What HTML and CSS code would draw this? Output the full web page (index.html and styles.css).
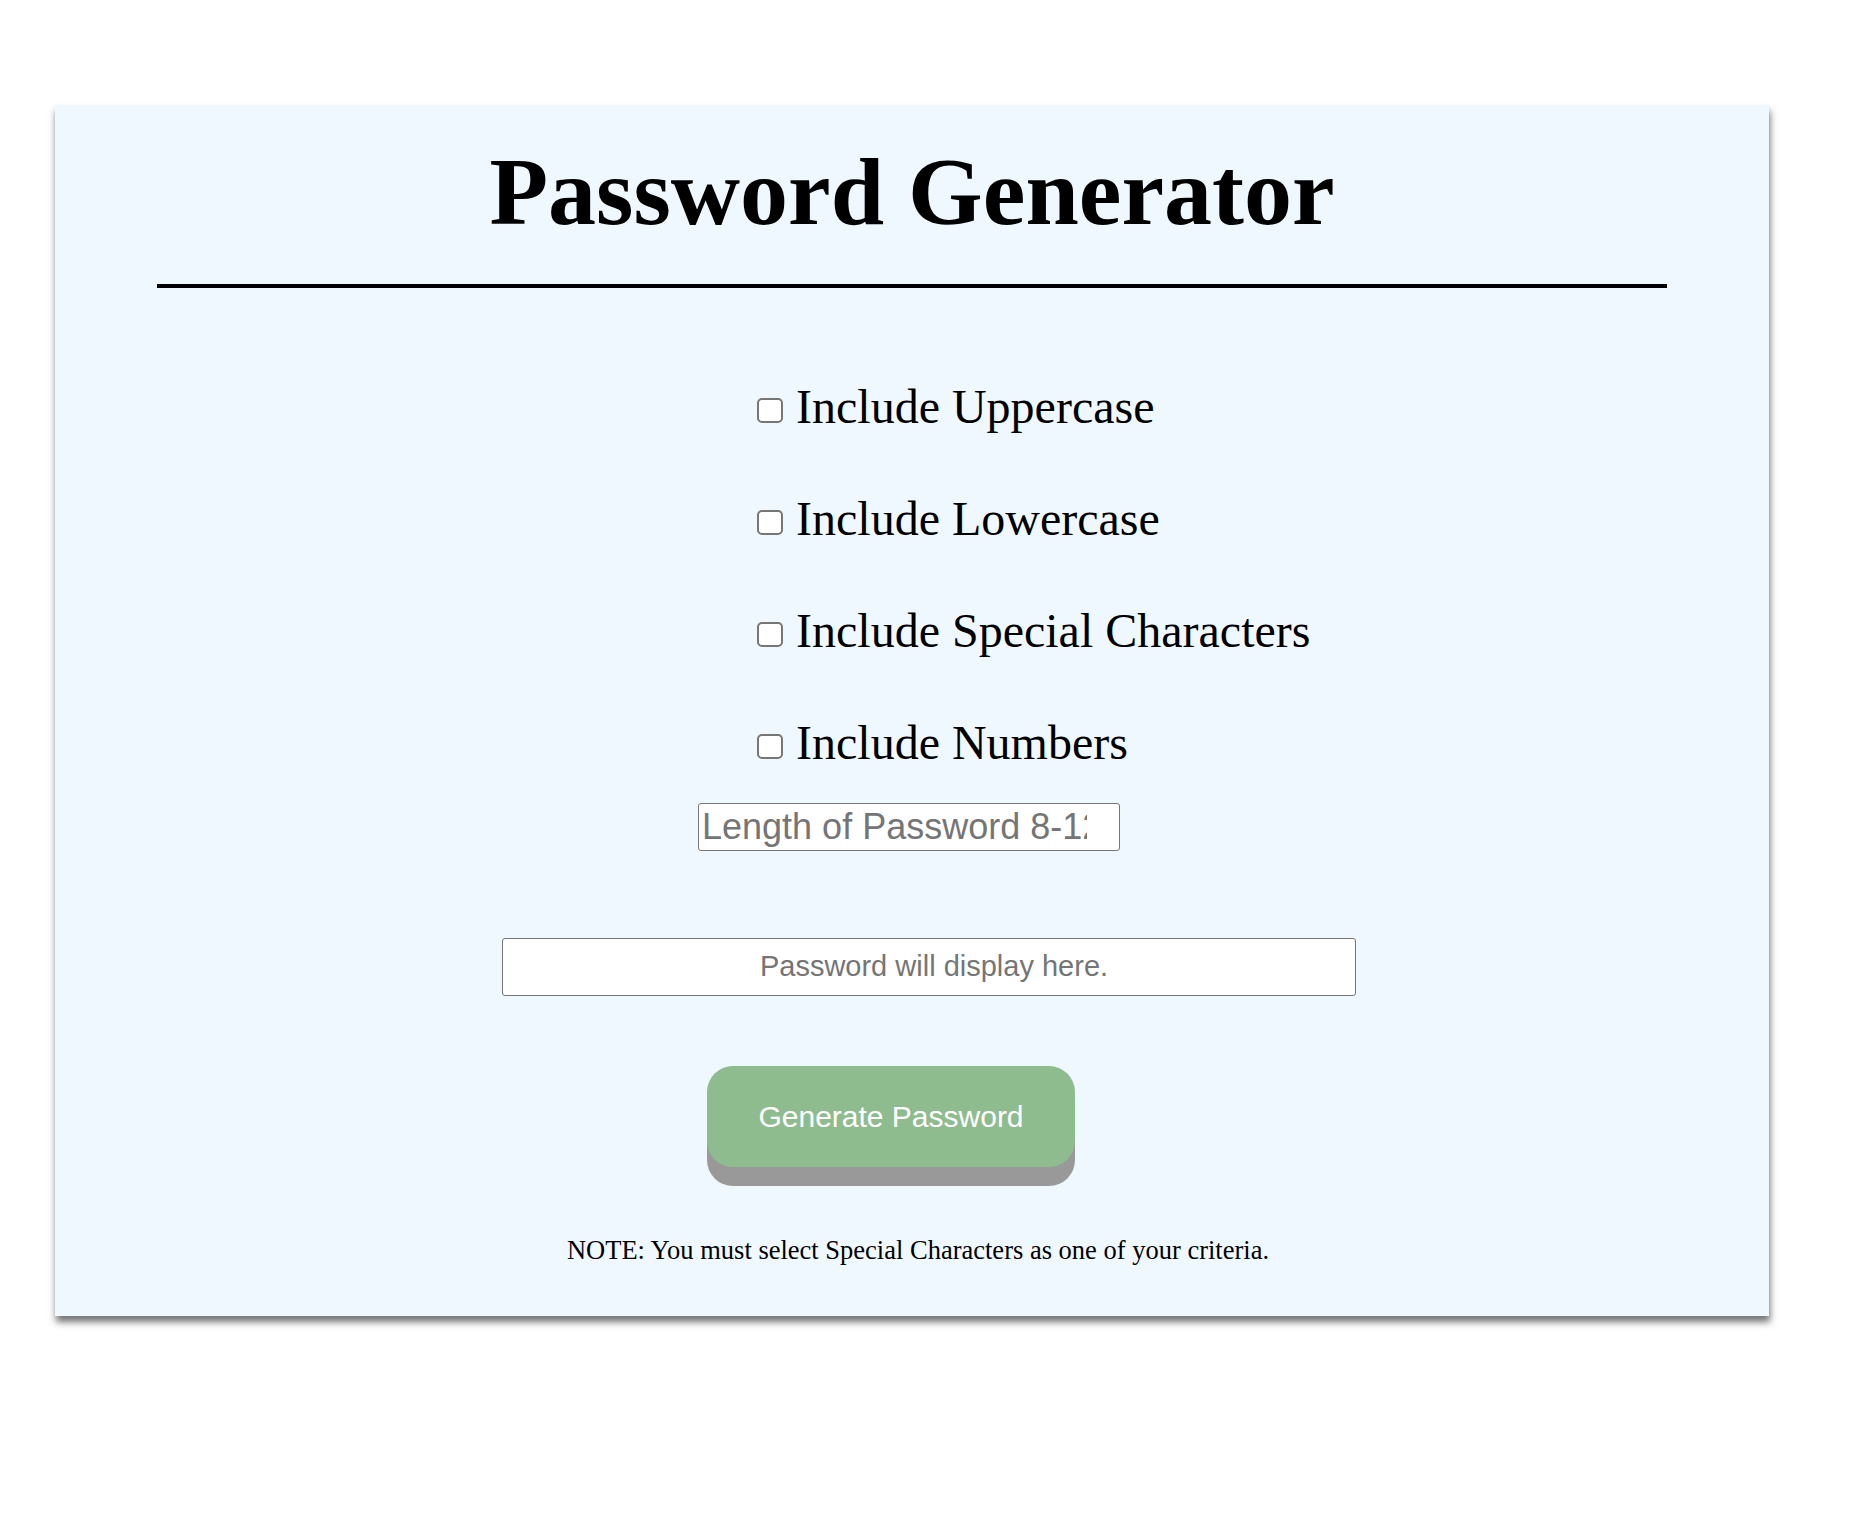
FILE: index.html
```html
<!DOCTYPE html>
<html lang="en">
<head>
<meta charset="utf-8">
<title>Password Generator</title>
<link rel="stylesheet" href="styles.css">
</head>
<body>
<div class="page">
  <div class="card">
    <h1 class="title">Password Generator</h1>
    <div class="rule"></div>
    <div class="options">
      <label class="option"><input type="checkbox" class="check"><span>Include Uppercase</span></label>
      <label class="option"><input type="checkbox" class="check"><span>Include Lowercase</span></label>
      <label class="option"><input type="checkbox" class="check"><span>Include Special Characters</span></label>
      <label class="option"><input type="checkbox" class="check"><span>Include Numbers</span></label>
    </div>
    <input type="text" class="length" placeholder="Length of Password 8-128">
    <textarea class="display" placeholder="Password will display here." readonly></textarea>
    <button class="generate" type="button">Generate Password</button>
    <p class="note">NOTE: You must select Special Characters as one of your criteria.</p>
  </div>
</div>
</body>
</html>
```
FILE: styles.css
```css
html, body {
  margin: 0;
  padding: 0;
  background: #ffffff;
}

body {
  font-family: "Liberation Serif", "Times New Roman", serif;
  color: #000;
}

.page {
  padding: 105px 0 200px 55px;
}

.card {
  box-sizing: border-box;
  width: 1714px;
  height: 1211px;
  padding-top: 32px;
  background: #f0f8ff;
  box-shadow: 1px 6px 7px rgba(0, 0, 0, 0.55);
  display: flex;
  flex-direction: column;
  align-items: center;
}

.title {
  margin: 0;
  font-size: 96px;
  line-height: 110px;
  font-weight: 700;
}

.rule {
  width: 1510px;
  height: 4px;
  background: #000;
  margin-top: 37px;
}

.options {
  align-self: flex-start;
  margin-left: 702px;
  margin-top: 91px;
  display: flex;
  flex-direction: column;
  gap: 56px;
}

.option {
  display: flex;
  align-items: center;
  height: 56px;
  font-size: 48px;
  line-height: 56px;
  gap: 13px;
}

.check {
  appearance: none;
  -webkit-appearance: none;
  box-sizing: border-box;
  width: 26px;
  height: 25px;
  margin: 6px 0 0 0;
  border: 2px solid #767676;
  border-radius: 5px;
  background: #ffffff;
}

.length {
  box-sizing: border-box;
  width: 422px;
  height: 48px;
  margin-top: 32px;
  margin-right: 6px;
  padding: 0 32px 0 3px;
  border: 1.5px solid #767676;
  border-radius: 3px;
  background: #fff;
  font-family: "Liberation Sans", Arial, sans-serif;
  font-size: 36px;
  color: #000;
}

.length::placeholder {
  color: #757575;
}

.display {
  box-sizing: border-box;
  width: 854px;
  height: 58px;
  margin-top: 87px;
  margin-left: 34px;
  padding: 10px 4px 0 14px;
  border: 1.5px solid #767676;
  border-radius: 3px;
  background: #fff;
  resize: none;
  overflow: hidden;
  font-family: "Liberation Sans", Arial, sans-serif;
  font-size: 29px;
  line-height: 34px;
  text-align: center;
}

.display::placeholder {
  color: #757575;
}

.generate {
  box-sizing: border-box;
  width: 368px;
  height: 101px;
  margin-top: 70px;
  margin-right: 42px;
  border: none;
  border-radius: 26px;
  background: #8fbc8f;
  box-shadow: 0 19px 0 #999999;
  color: #ffffff;
  font-family: "Liberation Sans", Arial, sans-serif;
  font-size: 30px;
  padding: 0;
}

.note {
  margin: 68px 0 0 12px;
  font-size: 26.5px;
  line-height: 30px;
}
```
